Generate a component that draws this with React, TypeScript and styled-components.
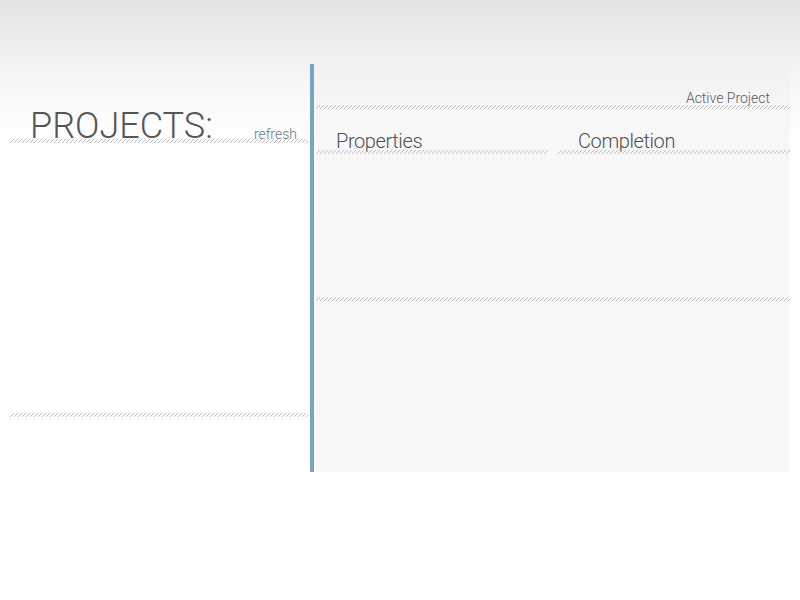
import React from "react";
import styled, { createGlobalStyle } from "styled-components";

const GlobalStyle = createGlobalStyle`
  html, body {
    margin: 0;
    padding: 0;
    height: 100%;
  }
  body {
    font-family: Roboto, "Liberation Sans", sans-serif;
    background: linear-gradient(to bottom, #e3e3e3 0px, #f6f6f6 80px, #ffffff 140px) no-repeat;
    background-color: #ffffff;
  }
`;

const Hatch = styled.div`
  height: 4px;
  background-image: linear-gradient(
    135deg,
    transparent 0%,
    transparent 40%,
    #bdbdbd 40%,
    #bdbdbd 60%,
    transparent 60%,
    transparent 100%
  );
  background-size: 4px 4px;
`;

const Page = styled.div`
  display: flex;
  padding: 64px 10px 0 10px;
  height: 600px;
  box-sizing: border-box;
`;

const Sidebar = styled.aside`
  width: 298px;
  display: flex;
  flex-direction: column;
`;

const SidebarHeader = styled.div`
  height: 75px;
  display: flex;
  align-items: flex-end;
  justify-content: space-between;
  padding: 0 11px 0 20px;
`;

const Title = styled.h1`
  margin: 0 0 -2px 0;
  font-size: 36px;
  line-height: 30px;
  font-weight: 300;
  color: #555555;
`;

const Refresh = styled.a`
  font-size: 14px;
  line-height: 14px;
  font-weight: 300;
  color: #5e7789;
  cursor: pointer;
  margin-bottom: -2px;
`;

const ProjectList = styled.ul`
  height: 270px;
  margin: 0;
  padding: 0;
  list-style: none;
`;

const Divider = styled.div`
  width: 4px;
  height: 408px;
  margin: 0 2px 0 2px;
  background: #76a3c6;
`;

const Panel = styled.section`
  width: 474px;
  height: 408px;
  background: linear-gradient(to bottom, #f1f1f1 0px, #f7f7f7 50px, #f8f8f8 100%);
  display: flex;
  flex-direction: column;
`;

const PanelHeader = styled.div`
  height: 41px;
  display: flex;
  align-items: flex-end;
  justify-content: flex-end;
  padding-right: 20px;
`;

const ActiveLabel = styled.span`
  font-size: 14px;
  line-height: 14px;
  font-weight: 300;
  color: #5c5c5c;
`;

const Columns = styled.div`
  display: grid;
  grid-template-columns: 1fr 1fr;
  column-gap: 10px;
`;

const Column = styled.div`
  display: flex;
  flex-direction: column;
`;

const ColumnHeader = styled.div`
  height: 41px;
  display: flex;
  align-items: flex-end;
  padding-left: 20px;
`;

const ColumnTitle = styled.h2`
  margin: 0;
  font-size: 20px;
  line-height: 18px;
  font-weight: 300;
  letter-spacing: -0.4px;
  color: #505050;
`;

const ColumnBody = styled.div`
  height: 143px;
`;

const App: React.FC = () => {
  return (
    <>
      <GlobalStyle />
      <Page>
        <Sidebar>
          <SidebarHeader>
            <Title>PROJECTS:</Title>
            <Refresh>refresh</Refresh>
          </SidebarHeader>
          <Hatch />
          <ProjectList />
          <Hatch />
        </Sidebar>
        <Divider />
        <Panel>
          <PanelHeader>
            <ActiveLabel>Active Project</ActiveLabel>
          </PanelHeader>
          <Hatch />
          <Columns>
            <Column>
              <ColumnHeader>
                <ColumnTitle>Properties</ColumnTitle>
              </ColumnHeader>
              <Hatch />
              <ColumnBody />
            </Column>
            <Column>
              <ColumnHeader>
                <ColumnTitle>Completion</ColumnTitle>
              </ColumnHeader>
              <Hatch />
              <ColumnBody />
            </Column>
          </Columns>
          <Hatch />
        </Panel>
      </Page>
    </>
  );
};

export default App;
